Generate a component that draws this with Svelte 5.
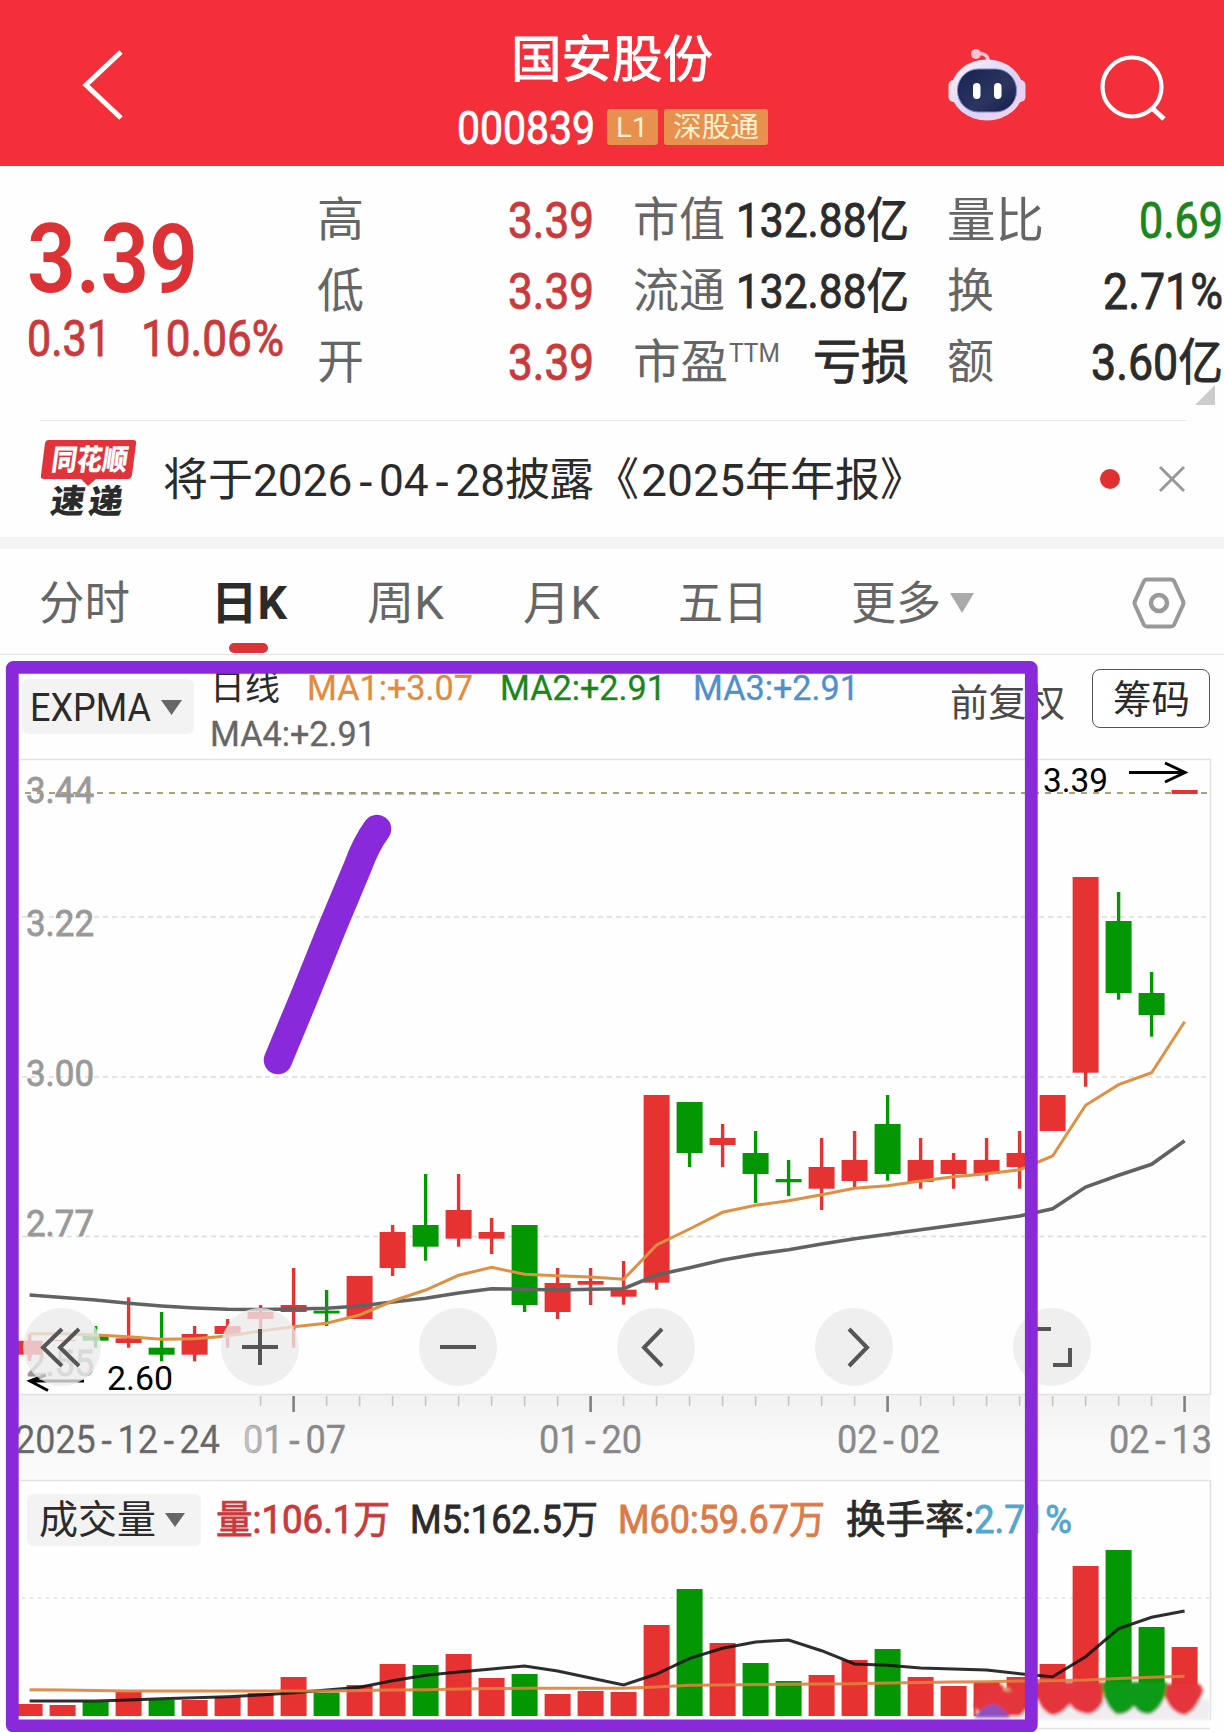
<script lang="ts">
    const range = [['高', '3.39'], ['低', '3.39'], ['开', '3.39']];
    const red = '#e73232';
    const green = '#039803';

    // [color, open/close top, open/close bottom, high, low, volume top]
    const days: [string, number, number, number, number, number][] = [
        ['r', 1340.7, 1354.7, 1334, 1361, 1704],
        ['r', 1340, 1341, 1340, 1341, 1705],
        ['g', 1334, 1340.7, 1326, 1347.7, 1702],
        ['r', 1338.3, 1343, 1297.3, 1347.7, 1692],
        ['g', 1347.7, 1354.7, 1312, 1361.3, 1700],
        ['r', 1334, 1354.7, 1326, 1361.3, 1700],
        ['r', 1326, 1334, 1319, 1347.7, 1697],
        ['r', 1312, 1319, 1305, 1334, 1693],
        ['r', 1305, 1312, 1268, 1347.7, 1677],
        ['g', 1310.7, 1313.5, 1290, 1326, 1692.5],
        ['r', 1276, 1319, 1276, 1319, 1685],
        ['r', 1232, 1268, 1225, 1276, 1664],
        ['g', 1225, 1246.7, 1174, 1260.7, 1665],
        ['r', 1210, 1238.7, 1174, 1246.7, 1654],
        ['r', 1232, 1238.7, 1218, 1254, 1678],
        ['g', 1225, 1305, 1225, 1312, 1674],
        ['r', 1283, 1312, 1268, 1319, 1694],
        ['r', 1281, 1284.7, 1268, 1305, 1691],
        ['r', 1289.7, 1296.7, 1261, 1304.7, 1692],
        ['r', 1095, 1282.7, 1095, 1289.7, 1625],
        ['g', 1102, 1153, 1102, 1167, 1589],
        ['r', 1138, 1145, 1124, 1167, 1643],
        ['g', 1153, 1174, 1131, 1203, 1663],
        ['g', 1179, 1182.3, 1160, 1196, 1681],
        ['r', 1167, 1188.7, 1138, 1210, 1675],
        ['r', 1160, 1181, 1131, 1187, 1660],
        ['g', 1124, 1174, 1095, 1180.7, 1649],
        ['r', 1160, 1182, 1138, 1188.7, 1677],
        ['r', 1160, 1174, 1153, 1188.7, 1686],
        ['r', 1160, 1174, 1138, 1180.7, 1682],
        ['r', 1153, 1167, 1131, 1188.7, 1677],
        ['r', 1095, 1131, 1095, 1131, 1664],
        ['r', 877, 1072.7, 877, 1086.7, 1566],
        ['g', 921, 993, 892, 999.7, 1550],
        ['g', 993, 1015, 972, 1036.7, 1627],
        ['r', 790, 794, 790, 794, 1647]
    ];
    const fast = [1333.7, 1333.7, 1335, 1336.7, 1339.3, 1338.7, 1336, 1331, 1326.7, 1323.3, 1315, 1301, 1290, 1275.3, 1267.3, 1274.3, 1275.7, 1277, 1279.3, 1245, 1229, 1212.3, 1205.3, 1200.7, 1194.7, 1188.3, 1185.7, 1181, 1176.7, 1173.7, 1169.7, 1156, 1105.3, 1084.7, 1072.7, 1021.7];
    const slow = [1295, 1297.5, 1300, 1303.3, 1306, 1308, 1309.3, 1309.5, 1309, 1308.3, 1306, 1302, 1298.3, 1293, 1288.7, 1289.3, 1290, 1289.3, 1288.7, 1275, 1267.7, 1260, 1254.3, 1249.7, 1244, 1238.7, 1234.3, 1229.7, 1225.3, 1220.7, 1216, 1208.7, 1187, 1175.3, 1164.3, 1140.7];
    const m5 = [1701, 1701, 1701, 1700, 1698.7, 1697.7, 1696.7, 1695, 1692.7, 1690, 1687.3, 1680.7, 1675.3, 1672, 1669, 1666, 1671, 1678, 1685, 1674, 1658.3, 1648.3, 1642, 1640, 1650.7, 1664, 1665.3, 1668, 1669, 1670, 1673.7, 1676.7, 1656.7, 1628.7, 1617.3, 1611];
    const m60 = [1689.7, 1690, 1690.5, 1691, 1691, 1691, 1691, 1691, 1691, 1691, 1690.5, 1690, 1689.7, 1689, 1688.5, 1688.3, 1688.3, 1688.3, 1688.3, 1687, 1685.3, 1685, 1684.5, 1684.3, 1684, 1683.7, 1683, 1682.5, 1682, 1681.7, 1681, 1680.7, 1680, 1678.5, 1677.3, 1676.3];

    const x = (i: number) => 29.6 + 33 * i;
    const color = (c: string) => (c === 'r' ? red : green);
    const line = (ys: number[]) => ys.map((y, i) => `${x(i)},${y}`).join(' ');

    const grid: [string, number, number][] = [['3.22', 917, 936], ['3.00', 1077, 1085.5], ['2.77', 1236.5, 1236]];
    const buttons = [62, 260, 458, 656, 854, 1052];
    const dates: [string, number, number, string][] = [
        ['2025-12-24', 15, 205, '#666'],
        ['01-07', 243, 103, 'url(#fade)'],
        ['01-20', 539, 103, '#888'],
        ['02-02', 837, 103, '#888'],
        ['02-13', 1109, 103, '#888']
    ];
</script>

<!-- text set to a fixed width, the digits are narrower than in Roboto -->
{#snippet t(text: string, w: number, size: number, cls = '')}
    <svg class="t {cls}" width={w} height={size * 1.2} font-size={size}>
        <text x="0" y={size * 0.95} textLength={w} lengthAdjust="spacingAndGlyphs">{text}</text>
    </svg>
{/snippet}

<!-- date with hyphens as wide as a digit -->
{#snippet date(text: string, dx: number, y: number, w: number, fill: string)}
    <text x={dx} {y} {fill} textLength={w} lengthAdjust="spacingAndGlyphs">{#each text.split(/(-)/) as part}<tspan class:hyphen={part === '-'}>{part}</tspan>{/each}</text>
{/snippet}

<div class="page">
    <header>
        <svg class="back" width="46" height="74" viewBox="0 0 46 74">
            <path d="M41 4 6 37 41 70" fill="none" stroke="#fff" stroke-width="5" />
        </svg>
        <div class="stock">
            {@render t('国安股份', 202, 50, 'medium')}
            <div class="code">
                {@render t('000839', 138, 47, 'medium')}
                <span class="badge l1">{@render t('L1', 32, 28)}</span>
                <span class="badge">{@render t('深股通', 86, 28)}</span>
            </div>
        </div>
        <svg class="robot" width="80" height="76" viewBox="0 0 80 76">
            <defs>
                <linearGradient id="shell" x1="0" y1="0" x2="1" y2="1">
                    <stop offset="0" stop-color="#fff3f5" />
                    <stop offset=".55" stop-color="#d9d4fb" />
                    <stop offset="1" stop-color="#fbd3e4" />
                </linearGradient>
                <linearGradient id="visor" x1="0" y1="0" x2="1" y2="1">
                    <stop offset="0" stop-color="#17234f" />
                    <stop offset=".6" stop-color="#2b3560" />
                    <stop offset="1" stop-color="#141c45" />
                </linearGradient>
            </defs>
            <path d="M29 7c8-2 13 2 12 9" fill="none" stroke="#ffc3cc" stroke-width="3.5" />
            <circle cx="29" cy="7" r="5" fill="#ffc3cc" />
            <rect x="1.5" y="33" width="12" height="22" rx="5" fill="#ffdfe8" />
            <rect x="66.5" y="33" width="12" height="22" rx="5" fill="#ecd0ee" />
            <ellipse cx="40" cy="43" rx="36" ry="30.5" fill="url(#shell)" />
            <rect x="10.5" y="22" width="59" height="43" rx="21" fill="url(#visor)" stroke="#7f83cf" stroke-width="1" />
            <rect x="26" y="36" width="7.5" height="16" rx="3.7" fill="#fff" />
            <rect x="47" y="36" width="7.5" height="16" rx="3.7" fill="#fff" />
        </svg>
        <svg class="search" width="70" height="70" viewBox="0 0 70 70">
            <g fill="none" stroke="#fff" stroke-width="4.2">
                <circle cx="33" cy="34" r="29.5" />
                <path d="m53 55 12 11" stroke-width="5" />
            </g>
        </svg>
    </header>

    <section class="quote">
        <div class="price">
            <div>{@render t('3.39', 171, 97, 'red bold')}</div>
            <div class="change">
                {@render t('0.31', 84, 50, 'dred medium')}
                {@render t('10.06%', 143, 50, 'dred medium')}
            </div>
        </div>
        <div class="col c1">
            {#each range as [name, value]}
                <div class="row">{@render t(name, 47, 47, 'gray')}{@render t(value, 86, 50, 'dred medium')}</div>
            {/each}
        </div>
        <div class="col c2">
            <div class="row">{@render t('市值', 92, 47, 'gray')}{@render t('132.88亿', 173, 48, 'medium')}</div>
            <div class="row">{@render t('流通', 92, 47, 'gray')}{@render t('132.88亿', 173, 48, 'medium')}</div>
            <div class="row">
                <span class="pe">{@render t('市盈', 95, 47, 'gray')}<span class="ttm">{@render t('TTM', 51, 25, 'gray')}</span></span>
                {@render t('亏损', 96, 48, 'medium')}
            </div>
        </div>
        <div class="col c3">
            <div class="row">{@render t('量比', 97, 48, 'gray')}{@render t('0.69', 84, 50, 'green medium')}</div>
            <div class="row">{@render t('换', 47, 47, 'gray')}{@render t('2.71%', 120, 50, 'medium')}</div>
            <div class="row">{@render t('额', 47, 47, 'gray')}{@render t('3.60亿', 132, 50, 'medium')}</div>
        </div>
        <svg class="corner" width="20" height="20"><path d="M20 0V20H0Z" fill="#ccc" /></svg>
    </section>

    <section class="news">
        <svg class="brand" width="98" height="82" viewBox="0 0 98 82">
            <path d="M8 2H93q4 0 3 4L92 37q-1 4-4 4H56l-8 7-7-7H4q-4 0-3-4L5 5q1-3 3-3Z" fill="#e0343a" />
            <g font-weight="900" transform="skewX(-8)">
                <text x="15" y="32" font-size="29" fill="#fff" textLength="76" lengthAdjust="spacingAndGlyphs">同花顺</text>
                <text x="20" y="75" font-size="33" fill="#2b2b2b" textLength="34" lengthAdjust="spacingAndGlyphs">速</text>
                <text x="58" y="75" font-size="33" fill="#2b2b2b" textLength="34" lengthAdjust="spacingAndGlyphs">递</text>
            </g>
        </svg>
        <svg class="headline" width="762" height="54" font-size="45">
            <text y="44" textLength="90" x="0">将于</text>
            {@render date('2026-04-28', 90, 44, 252, '#2b2b2b')}
            <text y="44" x="342" textLength="89">披露</text>
            <text y="44" x="431" textLength="45">《</text>
            <text y="44" x="478" textLength="104" lengthAdjust="spacingAndGlyphs">2025</text>
            <text y="44" x="582" textLength="180">年年报》</text>
        </svg>
        <span class="dot"></span>
        <svg class="close" width="28" height="28"><path d="m2 2 24 24M26 2 2 26" stroke="#999" stroke-width="3" /></svg>
    </section>

    <nav>
        <span class="tab">{@render t('分时', 91, 46)}</span>
        <span class="tab on">{@render t('日K', 76, 46, 'bold')}</span>
        <span class="tab">{@render t('周K', 77, 46)}</span>
        <span class="tab">{@render t('月K', 77, 46)}</span>
        <span class="tab">{@render t('五日', 90, 46)}</span>
        <span class="tab">{@render t('更多', 90, 46)}<svg class="caret" width="24" height="20"><path d="M0 0H24L12 20Z" fill="#aaa" /></svg></span>
        <svg class="hex" width="54" height="52" viewBox="0 0 54 52">
            <g fill="none" stroke="#999" stroke-width="4" stroke-linejoin="round">
                <path d="M15 2.5H39Q41 2.5 42 4L51 24Q52 26 51 28L42 48Q41 49.5 39 49.5H15Q13 49.5 12 48L3 28Q2 26 3 24L12 4Q13 2.5 15 2.5Z" />
                <circle cx="27" cy="26" r="8" stroke-width="4.5" />
            </g>
        </svg>
    </nav>

    <section class="toolbar">
        <span class="pill">{@render t('EXPMA', 121, 38)}<svg width="21" height="15"><path d="M0 0H21L10.5 15Z" fill="#666" /></svg></span>
        <div class="legend">
            <div class="line1">
                {@render t('日线', 70, 35)}
                {@render t('MA1:+3.07', 166, 34.5, 'orange thin')}
                {@render t('MA2:+2.91', 166, 34.5, 'green thin')}
                {@render t('MA3:+2.91', 166, 34.5, 'blue thin')}
            </div>
            {@render t('MA4:+2.91', 166, 35.5, 'gray thin')}
        </div>
        <span class="adjust">{@render t('前复权', 115, 38, 'mid')}</span>
        <button>{@render t('筹码', 77, 39)}</button>
    </section>

    <svg class="chart" width="1224" height="722" viewBox="0 759 1224 722">
        <defs>
            <linearGradient id="axis" x1="0" y1="0" x2="0" y2="1">
                <stop offset="0" stop-color="#f1f1f1" />
                <stop offset=".5" stop-color="#f9f9f9" />
                <stop offset="1" stop-color="#fafafa" />
            </linearGradient>
            <linearGradient id="fade" gradientUnits="userSpaceOnUse" x1="244" y1="0" x2="300" y2="0">
                <stop offset="0" stop-color="#c4c4c4" />
                <stop offset="1" stop-color="#888" />
            </linearGradient>
        </defs>
        <rect x="19" y="1395" width="1191" height="86" fill="url(#axis)" />
        <path d="M19 759.5H1210.5V1395M19 1394.5H1210M19 1480.5H1210" fill="none" stroke="#e2e2e2" stroke-width="1.6" />
        <g font-size="37" class="ylabels">
            <text x="26" y="803" textLength="68" lengthAdjust="spacingAndGlyphs">3.44</text>
            {#each grid as [label, gy, ty]}
                <path d="M22 {gy}H1210" stroke="#dcdcdc" stroke-width="1.4" stroke-dasharray="5 4" />
                <text x="26" y={ty} textLength="68" lengthAdjust="spacingAndGlyphs">{label}</text>
            {/each}
            <text x="26" y="1376" textLength="68" lengthAdjust="spacingAndGlyphs">2.55</text>
        </g>
        <path d="M25 793H1210" stroke="#aaa37a" stroke-width="1.8" stroke-dasharray="6 6" />
        <path d="M301 793.5H440" stroke="#8a8768" stroke-width="2.6" stroke-dasharray="7 5" opacity=".6" />

        {#each days as [c, top, bottom, high, low], i}
            <path d="M{x(i)} {high}V{low}" stroke={color(c)} stroke-width="3.4" />
            <rect x={x(i) - 13} y={top} width="26" height={bottom - top} fill={color(c)} />
        {/each}
        <polyline points={line(slow)} fill="none" stroke="#606263" stroke-width="3.6" />
        <polyline points={line(fast)} fill="none" stroke="#dc9144" stroke-width="3" />

        <g fill="none" stroke="#000" stroke-width="3">
            <path d="M1129 772.5H1184M1165 763 1185 772.5 1165 782" />
            <path d="M84 1381H31M48 1390.5 30 1381 46 1375" />
        </g>
        <text x="1043" y="792" font-size="34" textLength="65" lengthAdjust="spacingAndGlyphs" fill="#000">3.39</text>
        <text x="107" y="1390" font-size="34" textLength="66" lengthAdjust="spacingAndGlyphs" fill="#000">2.60</text>

        {#each buttons as bx}
            <circle cx={bx} cy="1347" r="39" fill="#ebebeb" opacity=".78" />
        {/each}
        <g fill="none" stroke="#555" stroke-width="4">
            <path d="M62 1329 43 1347.5 62 1366M79 1329 60 1347.5 79 1366" />
            <path d="M242 1347H278M260 1329V1365M440 1347H476" />
            <path d="M662 1329 644 1347.5 662 1366M849 1329 867 1347.5 849 1366" />
            <path d="M1034 1345V1329H1051M1053 1365H1070V1348" />
        </g>

        {#each days as _, i}
            {#if i % 9 === 8}
                <path d="M{x(i)} 1396V1412" stroke="#808080" stroke-width="2.6" />
            {:else if i > 6}
                <path d="M{x(i)} 1396V1406" stroke="#c4c4c4" stroke-width="1.6" />
            {/if}
        {/each}
        <g font-size="38" class="dates">
            {#each dates as [label, dx, w, fill]}
                {@render date(label, dx, 1452.5, w, fill)}
            {/each}
        </g>
    </svg>

    <section class="vol-head">
        <span class="pill">{@render t('成交量', 117, 39)}<svg width="20" height="14"><path d="M0 0H20L10 14Z" fill="#666" /></svg></span>
        {@render t('量:106.1万', 174, 39, 'dred medium')}
        {@render t('M5:162.5万', 188, 39, 'medium')}
        {@render t('M60:59.67万', 207, 39, 'tan medium')}
        <div class="turnover">
            {@render t('换手率:', 128, 39, 'medium')}
            {@render t('2.71%', 98, 39, 'sky medium')}
        </div>
    </section>

    <svg class="chart" width="1224" height="175" viewBox="0 1557 1224 175">
        <defs>
            <filter id="soft"><feGaussianBlur stdDeviation="1.6" /></filter>
        </defs>
        <path d="M22 1598H1210" stroke="#dedede" stroke-width="1.6" stroke-dasharray="3 5" />
        <path d="M1210.5 1480V1720M1037 1728.5H1210" stroke="#e2e2e2" stroke-width="1.6" />
        {#each days as [c, , , , , v], i}
            <!-- the last five bars end under the smeared patch -->
            <rect x={x(i) - 13} y={v} width="26" height={(i > 30 ? 1690 : 1716) - v} fill={color(c)} />
        {/each}
        <!-- smeared patch over the last bars -->
        <g filter="url(#soft)">
            <path d="M976 1700H1210V1720H976Z" fill="#f0edf1" />
            <path d="M980 1684H1001L1008 1692 1017 1682H1103V1702Q1096 1714 1088 1714 1074 1712 1070 1704 1060 1716 1052 1715 1042 1712 1037 1698L1020 1716H982L974 1706Z" fill="#e3343a" />
            <path d="M1165 1684H1200L1203 1690Q1196 1712 1184 1715 1170 1712 1165 1696Z" fill="#e3343a" />
            <path d="M1102 1682H1167Q1166 1706 1150 1714 1140 1715 1134 1706 1126 1716 1116 1714 1103 1704 1102 1682Z" fill="#0d9a14" />
            <path d="M974 1718Q982 1706 994 1704 1004 1708 1010 1718Z" fill="#9150c0" />
            <path d="M1002 1690 1012 1692 1007 1686Z" fill="#d8a878" />
        </g>
        <polyline points={line(m5)} fill="none" stroke="#111" stroke-width="3" opacity=".88" />
        <polyline points={line(m60)} fill="none" stroke="#e0803f" stroke-width="3" opacity=".9" />
    </svg>

    <!-- purple marker drawn by the user -->
    <svg class="marker" width="1224" height="1732">
        <g fill="none" stroke="#8829da">
            <rect x="12.3" y="667.4" width="1019" height="1058.5" rx="1" stroke-width="12.8" stroke-linejoin="round" />
            <path d="M377 829Q366 844 358 866L332 928 305 995 278 1060" stroke-width="28.5" stroke-linecap="round" stroke-linejoin="round" />
        </g>
    </svg>
</div>

<style>
    :global(body) {
        margin: 0;
        background: #fff;
    }
    .page {
        position: relative;
        width: 1224px;
        height: 1732px;
        overflow: hidden;
        background: #fefefe;
        color: #2b2b2b;
        font-family: Roboto, "Noto Sans CJK SC", sans-serif;
    }
    svg {
        display: block;
        flex: none;
        overflow: visible;
    }
    .t {
        color: #2b2b2b;
        fill: currentColor;
    }
    /* between regular and medium */
    .medium {
        stroke: currentColor;
        stroke-width: 0.9px;
    }
    .thin {
        stroke: currentColor;
        stroke-width: 0.3px;
    }
    .bold { font-weight: 700; }
    .red { color: #dc3236; font-weight: 600; }
    .dred { color: #c93a3c; }
    .gray { color: #666; }
    .mid { color: #4a4a4a; }
    .green { color: #1c861c; }
    .orange { color: #e08c40; }
    .blue { color: #4f8fcb; }
    .tan { color: #dc7a48; }
    .sky { color: #55a5cc; }
    .hyphen {
        font-family: "DejaVu Sans Mono", monospace;
    }
    .ylabels {
        fill: #999;
    }
    .ylabels text {
        stroke: #999;
        stroke-width: 0.8px;
    }
    .dates {
        stroke: #888;
        stroke-width: 0.3px;
    }

    header {
        display: flex;
        height: 166px;
        background: #f32f39;
    }
    header .t {
        color: #fff;
    }
    .back {
        margin: 48px 0 0 80px;
    }
    .stock {
        display: flex;
        flex-direction: column;
        align-items: center;
        gap: 10px;
        width: 314px;
        margin: 29px 0 0 329px;
    }
    .code {
        display: flex;
        align-items: center;
    }
    .badge {
        display: flex;
        justify-content: center;
        align-items: center;
        width: 104px;
        height: 36px;
        border-radius: 3px;
        background: #e8914f;
    }
    .badge .t {
        color: #fff0cf;
    }
    .l1 {
        width: 51px;
        margin: 0 6px 0 12px;
    }
    .robot {
        margin: 47px 0 0 178px;
    }
    .search {
        margin: 53px 0 0 72px;
    }

    .quote {
        position: relative;
        display: flex;
        height: 254px;
    }
    .price {
        width: 317px;
        padding: 34px 0 0 27px;
        box-sizing: border-box;
    }
    .change {
        display: flex;
        gap: 30px;
        margin-top: -8px;
    }
    .col {
        padding-top: 18px;
    }
    .row {
        display: flex;
        justify-content: space-between;
        align-items: center;
        height: 71px;
    }
    .c1 { width: 277px; }
    .c2 { width: 276px; margin-left: 39px; }
    .c3 { width: 276px; margin-left: 38px; }
    .pe {
        display: flex;
        align-items: flex-start;
    }
    .ttm {
        margin: 5px 0 0 1px;
    }
    .corner {
        position: absolute;
        right: 9px;
        bottom: 15px;
    }

    .news {
        display: flex;
        align-items: center;
        height: 117px;
        margin-left: 40px;
        width: 1146px;
        border-top: 1px solid #e6e6e6;
        box-sizing: border-box;
    }
    .headline {
        margin-left: 25px;
        fill: #2b2b2b;
    }
    .dot {
        width: 20px;
        height: 20px;
        margin-left: 175px;
        border-radius: 50%;
        background: #e03030;
    }
    .close {
        margin-left: 38px;
    }

    nav {
        display: flex;
        align-items: center;
        height: 118px;
        padding: 3px 0 0 39px;
        box-sizing: border-box;
        border-top: 12px solid #f4f4f4;
        border-bottom: 1px solid #e4e4e4;
    }
    .tab {
        position: relative;
        display: flex;
        align-items: center;
    }
    .tab .t {
        color: #666;
    }
    .tab.on {
        margin: 0 80px 0 81px;
    }
    .tab.on .t {
        color: #2b2b2b;
    }
    .tab.on::after {
        content: "";
        position: absolute;
        left: 18px;
        top: 68px;
        width: 39px;
        height: 10px;
        border-radius: 5px;
        background: #d93438;
    }
    .tab:nth-child(4) { margin-left: 79px; }
    .tab:nth-child(5) { margin-left: 78px; }
    .tab:nth-child(6) { margin-left: 83px; }
    .caret {
        margin-left: 9px;
    }
    .hex {
        margin-left: 158px;
    }

    .toolbar {
        display: flex;
        height: 104px;
    }
    .pill {
        display: flex;
        align-items: center;
        box-sizing: border-box;
        border-radius: 6px;
        background: #f3f3f3;
    }
    .toolbar .pill {
        width: 172px;
        height: 55px;
        margin: 24px 0 0 22px;
        padding: 2px 0 0 8px;
        gap: 10px;
    }
    .legend {
        width: 660px;
        margin: 12px 0 0 16px;
    }
    .line1 {
        display: flex;
        gap: 27px;
        margin-bottom: 3px;
    }
    .adjust {
        margin: 25px 0 0 80px;
    }
    button {
        display: flex;
        justify-content: center;
        align-items: center;
        width: 118px;
        height: 59px;
        margin: 14px 0 0 27px;
        padding: 2px 0 0;
        border: 1.5px solid #555;
        border-radius: 8px;
        background: #fff;
        font-family: inherit;
    }

    .vol-head {
        display: flex;
        align-items: center;
        gap: 20px;
        height: 76px;
        padding-top: 1px;
        box-sizing: border-box;
    }
    .vol-head .pill {
        width: 174px;
        height: 52px;
        margin: 0 -5px 0 27px;
        padding-left: 12px;
        gap: 9px;
    }
    .turnover {
        display: flex;
        margin-left: 1px;
    }
    .marker {
        position: absolute;
        left: 0;
        top: 0;
    }
</style>
